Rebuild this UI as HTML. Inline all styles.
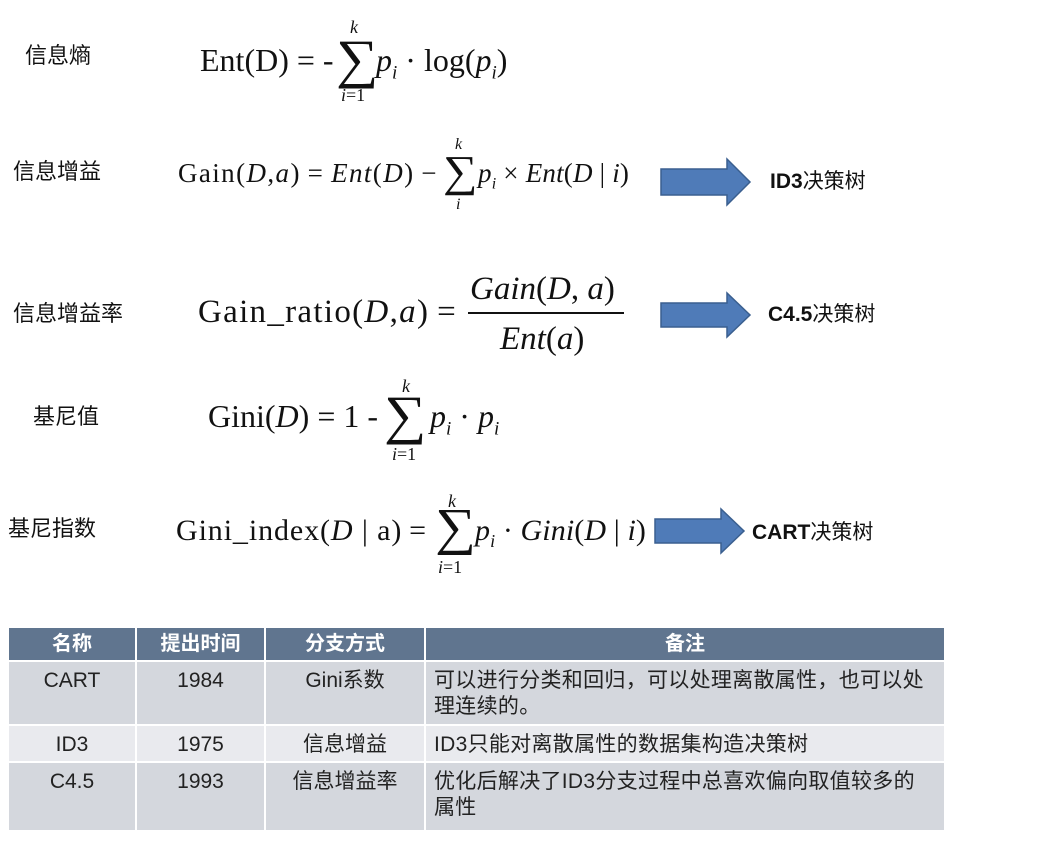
<!DOCTYPE html>
<html><head><meta charset="utf-8"><style>
body{margin:0;width:1048px;height:843px;background:#fff;position:relative;overflow:hidden;font-family:"Liberation Serif","Noto Serif CJK SC",serif;color:#111}
.a{position:absolute;white-space:nowrap;line-height:1}
.cn{font-family:"Liberation Sans","Noto Sans CJK SC",sans-serif;font-size:22px}
i{font-style:italic}
.lb{font-family:"Liberation Sans","Noto Sans CJK SC",sans-serif;font-size:21px}
.lb b{font-weight:bold}
.sg{transform:scaleX(1.1);transform-origin:left}
table{position:absolute;left:9px;top:628px;width:937px;border-collapse:collapse;font-family:"Liberation Sans","Noto Sans CJK SC",sans-serif;font-size:21px;color:#222;table-layout:fixed}
td,th{border-right:2px solid #fff;border-bottom:2px solid #fff;padding:0;vertical-align:top;line-height:26px}
th{background:#60758f;color:#fff;height:32px;vertical-align:middle;font-size:20px}
td.c{text-align:center}
td{padding-top:6px}
td.t{padding-left:8px;letter-spacing:0.3px}
</style></head><body>
<div class="a cn" style="left:25px;top:45px">信息熵</div>
<div class="a cn" style="left:13px;top:161px">信息增益</div>
<div class="a cn" style="left:13px;top:303px">信息增益率</div>
<div class="a cn" style="left:33px;top:406px">基尼值</div>
<div class="a cn" style="left:8px;top:518px">基尼指数</div>

<!-- F1 -->
<div class="a" style="left:200px;top:44px;font-size:32px">Ent(D) = -</div>
<div class="a sg" style="left:336px;top:32px;font-size:54px">∑</div>
<div class="a" style="left:350px;top:18px;font-size:18px"><i>k</i></div>
<div class="a" style="left:341px;top:86px;font-size:18px"><i>i</i>=1</div>
<div class="a" style="left:376px;top:44px;font-size:32px"><i>p<sub style="font-size:19px">i</sub></i> · log(<i>p<sub style="font-size:19px">i</sub></i>)</div>

<!-- F2 -->
<div class="a" style="left:178px;top:160px;font-size:27px;letter-spacing:1.4px">Gain(<i>D</i>,<i>a</i>)&thinsp;=&thinsp;<i>Ent</i>(<i>D</i>)&thinsp;−</div>
<div class="a sg" style="left:443px;top:150px;font-size:44px">∑</div>
<div class="a" style="left:455px;top:137px;font-size:16px"><i>k</i></div>
<div class="a" style="left:456px;top:197px;font-size:16px"><i>i</i></div>
<div class="a" style="left:478px;top:160px;font-size:27px;letter-spacing:0.2px"><i>p<sub style="font-size:16px">i</sub></i> × <i>Ent</i>(<i>D</i> | <i>i</i>)</div>

<!-- F3 -->
<div class="a" style="left:198px;top:296px;font-size:33px;letter-spacing:1.3px">Gain_ratio(<i>D</i>,<i>a</i>)&thinsp;=</div>
<div class="a" style="left:470px;top:273px;font-size:33px"><i>Gain</i>(<i>D</i>, <i>a</i>)</div>
<div class="a" style="left:468px;top:312px;width:156px;height:2px;background:#111"></div>
<div class="a" style="left:500px;top:323px;font-size:33px"><i>Ent</i>(<i>a</i>)</div>

<!-- F4 -->
<div class="a" style="left:208px;top:400px;font-size:32px">Gini(<i>D</i>) = 1 -</div>
<div class="a sg" style="left:384px;top:388px;font-size:54px">∑</div>
<div class="a" style="left:402px;top:377px;font-size:18px"><i>k</i></div>
<div class="a" style="left:392px;top:445px;font-size:18px"><i>i</i>=1</div>
<div class="a" style="left:430px;top:400px;font-size:32px"><i>p<sub style="font-size:19px">i</sub></i> · <i>p<sub style="font-size:19px">i</sub></i></div>

<!-- F5 -->
<div class="a" style="left:176px;top:516px;font-size:30px;letter-spacing:0.9px">Gini_index(<i>D</i> | a)&thinsp;=</div>
<div class="a sg" style="left:435px;top:502px;font-size:52px">∑</div>
<div class="a" style="left:448px;top:492px;font-size:18px"><i>k</i></div>
<div class="a" style="left:438px;top:558px;font-size:18px"><i>i</i>=1</div>
<div class="a" style="left:475px;top:516px;font-size:30px;letter-spacing:0.1px"><i>p<sub style="font-size:18px">i</sub></i> · <i>Gini</i>(<i>D</i> | <i>i</i>)</div>

<!-- arrows -->
<svg class="a" style="left:0;top:0" width="1048" height="843">
<g fill="#4f7bb8" stroke="#3a5f8f" stroke-width="1.5">
<polygon points="661,169 727,169 727,159 750,182 727,205 727,195 661,195"/>
<polygon points="661,303 727,303 727,293 750,315 727,337 727,327 661,327"/>
<polygon points="655,519 721,519 721,509 744,531 721,553 721,543 655,543"/>
</g></svg>
<div class="a lb" style="left:770px;top:171px"><b>ID3</b>决策树</div>
<div class="a lb" style="left:768px;top:304px"><b>C4.5</b>决策树</div>
<div class="a lb" style="left:752px;top:522px"><b>CART</b>决策树</div>

<table>
<tr><th style="width:126px">名称</th><th style="width:127px">提出时间</th><th style="width:158px">分支方式</th><th>备注</th></tr>
<tr style="background:#d4d7dd;height:64px"><td class="c">CART</td><td class="c">1984</td><td class="c">Gini系数</td><td class="t">可以进行分类和回归，可以处理离散属性，也可以处<br>理连续的。</td></tr>
<tr style="background:#e9eaee;height:37px"><td class="c">ID3</td><td class="c">1975</td><td class="c">信息增益</td><td class="t">ID3只能对离散属性的数据集构造决策树</td></tr>
<tr style="background:#d4d7dd;height:69px"><td class="c">C4.5</td><td class="c">1993</td><td class="c">信息增益率</td><td class="t">优化后解决了ID3分支过程中总喜欢偏向取值较多的<br>属性</td></tr>
</table>
</body></html>
